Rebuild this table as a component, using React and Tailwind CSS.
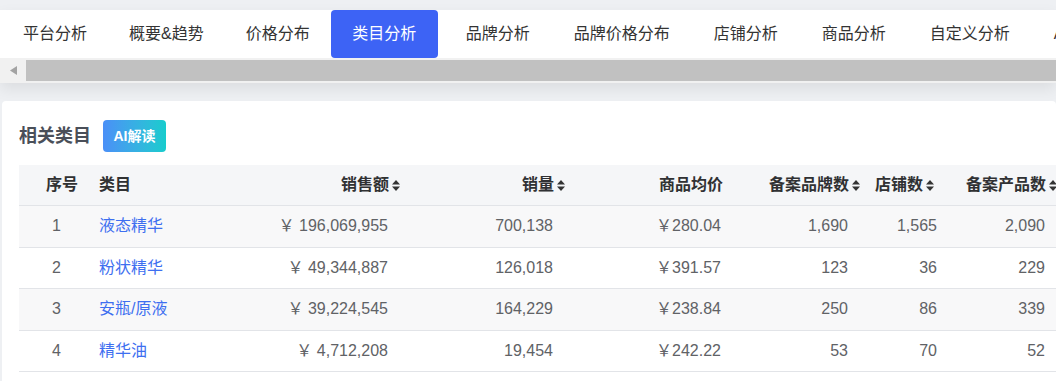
import React from "react";

const tabs = [
  "平台分析",
  "概要&趋势",
  "价格分布",
  "类目分析",
  "品牌分析",
  "品牌价格分布",
  "店铺分析",
  "商品分析",
  "自定义分析",
  "AI洞察",
];

const rows = [
  { idx: 1, name: "液态精华", sales: "￥ 196,069,955", vol: "700,138", avg: "￥280.04", brand: "1,690", shop: "1,565", prod: "2,090" },
  { idx: 2, name: "粉状精华", sales: "￥ 49,344,887", vol: "126,018", avg: "￥391.57", brand: "123", shop: "36", prod: "229" },
  { idx: 3, name: "安瓶/原液", sales: "￥ 39,224,545", vol: "164,229", avg: "￥238.84", brand: "250", shop: "86", prod: "339" },
  { idx: 4, name: "精华油", sales: "￥ 4,712,208", vol: "19,454", avg: "￥242.22", brand: "53", shop: "70", prod: "52" },
];

const ACTIVE = 3;

const SortIcon = () => (
  <svg width="8" height="11" viewBox="0 0 8 11" className="ml-[3px] shrink-0">
    <path d="M0 4.5 L4 0 L8 4.5 Z" fill="#333" />
    <path d="M0 6.5 L8 6.5 L4 11 Z" fill="#333" />
  </svg>
);

const tabClass = (i) => {
  if (i === ACTIVE)
    return "shrink-0 flex items-center px-[21.5px] mr-[6px] text-[16px] text-white bg-[#3d63f5] rounded-[4px]";
  if (i < ACTIVE) return "shrink-0 flex items-center px-[21px] text-[16px] text-[#333]";
  return "shrink-0 flex items-center px-[22px] text-[16px] text-[#333]";
};

const App = () => {
  return (
    <div
      className="w-[1056px] h-[381px] overflow-hidden bg-[#eef0f3] pt-[10px]"
      style={{ fontFamily: '"Liberation Sans", "Noto Sans CJK SC", sans-serif' }}
    >
      {/* Tabs + scrollbar */}
      <div className="bg-white shadow-[0_6px_14px_rgba(0,0,0,0.08)] mb-[18px]">
        <div className="flex h-[48px] pl-[2px] whitespace-nowrap overflow-hidden">
          {tabs.map((t, i) => (
            <div key={t} className={tabClass(i)}>
              {t}
            </div>
          ))}
        </div>
        <div className="flex items-center h-[25px] bg-[#f1f1f1]">
          <div className="w-[26px] h-full flex items-center justify-center">
            <svg width="7" height="9" viewBox="0 0 7 9">
              <path d="M7 0 L0 4.5 L7 9 Z" fill="#a3a3a3" />
            </svg>
          </div>
          <div className="flex-1 h-[21px] bg-[#c1c1c1]"></div>
        </div>
      </div>

      {/* Card */}
      <div className="ml-[2px] bg-white rounded-[4px] pl-[17px] pt-[19px] h-[300px] overflow-hidden">
        <div className="flex items-center h-[32px] mb-[13px]">
          <h2 className="text-[18px] font-bold text-[#4a4f59]">相关类目</h2>
          <span className="ml-[12px] h-[32px] w-[63px] flex items-center justify-center rounded-[4px] bg-gradient-to-r from-[#4a8ff7] to-[#16cccd] text-white text-[14px] font-bold">
            AI解读
          </span>
        </div>

        <div className="w-[1050px] text-[16px]">
          {/* Header */}
          <div className="flex h-[41px] bg-[#f5f6f8] border-b border-[#e2e4e8] font-bold text-[#303133]">
            <div className="w-[68px] shrink-0 flex items-center pl-[27px]">序号</div>
            <div className="w-[163px] shrink-0 flex items-center pl-[12px]">类目</div>
            <div className="w-[150px] shrink-0 flex items-center justify-end">销售额<SortIcon /></div>
            <div className="w-[165px] shrink-0 flex items-center justify-end">销量<SortIcon /></div>
            <div className="w-[168px] shrink-0 flex items-center justify-end pr-[10px]">商品均价</div>
            <div className="w-[127px] shrink-0 flex items-center justify-end">备案品牌数<SortIcon /></div>
            <div className="w-[89px] shrink-0 flex items-center justify-end pr-[15px]">店铺数<SortIcon /></div>
            <div className="w-[108px] shrink-0 flex items-center justify-end">备案产品数<SortIcon /></div>
          </div>

          {/* Rows */}
          {rows.map((r, i) => (
            <div
              key={r.idx}
              className={
                "flex h-[41.5px] border-b border-[#e2e4e8] text-[#606266] " +
                (i % 2 === 0 ? "bg-[#f8f8f9]" : "bg-white")
              }
            >
              <div className="w-[68px] shrink-0 flex items-center pl-[33px]">{r.idx}</div>
              <div className="w-[163px] shrink-0 flex items-center pl-[12px] text-[#3e6ff0]">{r.name}</div>
              <div className="w-[150px] shrink-0 flex items-center justify-end pr-[12px]">{r.sales}</div>
              <div className="w-[165px] shrink-0 flex items-center justify-end pr-[12px]">{r.vol}</div>
              <div className="w-[168px] shrink-0 flex items-center justify-end pr-[12px]">{r.avg}</div>
              <div className="w-[127px] shrink-0 flex items-center justify-end pr-[12px]">{r.brand}</div>
              <div className="w-[89px] shrink-0 flex items-center justify-end pr-[12px]">{r.shop}</div>
              <div className="w-[108px] shrink-0 flex items-center justify-end pr-[12px]">{r.prod}</div>
            </div>
          ))}
        </div>
      </div>
    </div>
  );
};

export default App;
